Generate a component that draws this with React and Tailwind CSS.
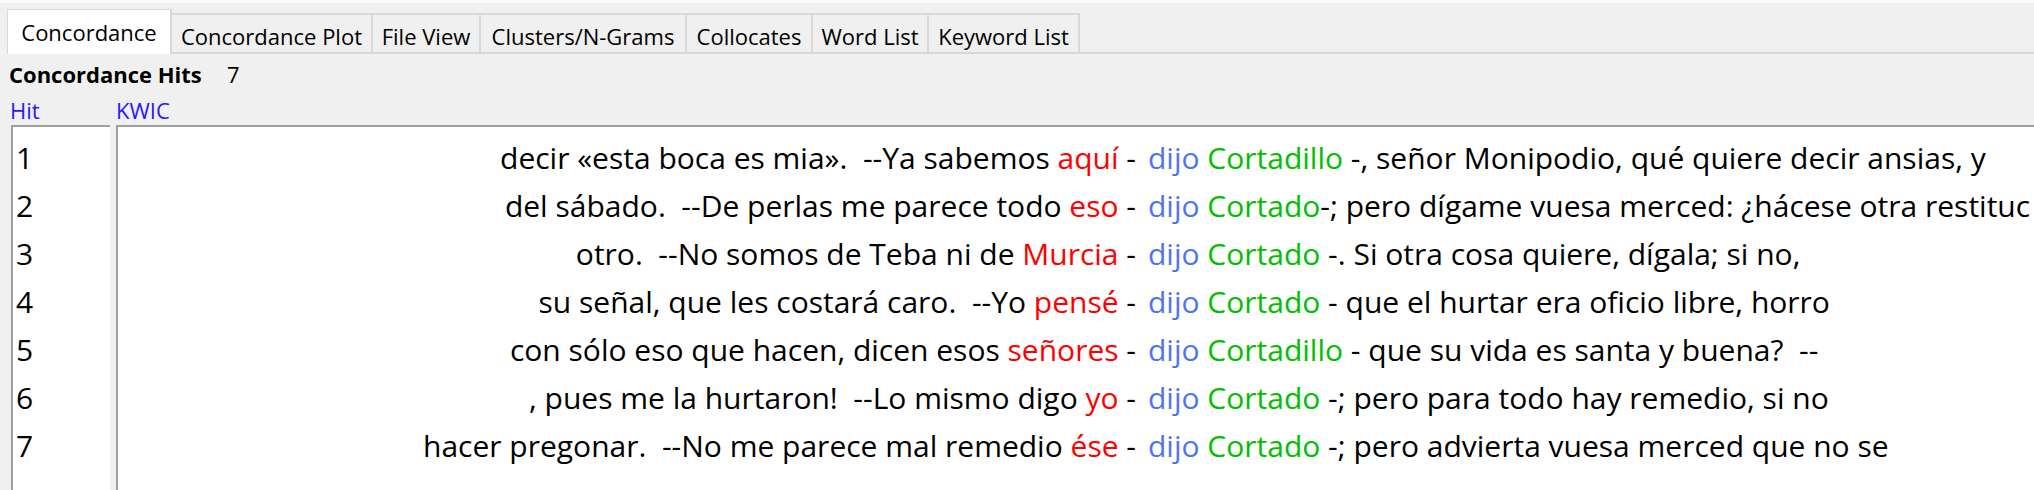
import React from 'react';

const tabs = [
  { label: 'Concordance', width: 'w-[165px]', active: true },
  { label: 'Concordance Plot', width: 'w-[201px]' },
  { label: 'File View', width: 'w-[108px]' },
  { label: 'Clusters/N-Grams', width: 'w-[206px]' },
  { label: 'Collocates', width: 'w-[126px]' },
  { label: 'Word List', width: 'w-[116px]' },
  { label: 'Keyword List', width: 'w-[151px]' },
];

const hits = [
  { left: 'decir «esta boca es mia».  --Ya sabemos ', word: 'aquí', coll: 'Cortadillo', rest: ' -, señor Monipodio, qué quiere decir ansias, y' },
  { left: 'del sábado.  --De perlas me parece todo ', word: 'eso', coll: 'Cortado', rest: '-; pero dígame vuesa merced: ¿hácese otra restituc' },
  { left: 'otro.  --No somos de Teba ni de ', word: 'Murcia', coll: 'Cortado', rest: ' -. Si otra cosa quiere, dígala; si no,' },
  { left: 'su señal, que les costará caro.  --Yo ', word: 'pensé', coll: 'Cortado', rest: ' - que el hurtar era oficio libre, horro' },
  { left: 'con sólo eso que hacen, dicen esos ', word: 'señores', coll: 'Cortadillo', rest: ' - que su vida es santa y buena?  --' },
  { left: ', pues me la hurtaron!  --Lo mismo digo ', word: 'yo', coll: 'Cortado', rest: ' -; pero para todo hay remedio, si no' },
  { left: 'hacer pregonar.  --No me parece mal remedio ', word: 'ése', coll: 'Cortado', rest: ' -; pero advierta vuesa merced que no se' },
];

const Tab = ({ label, width, active }) => {
  if (active) {
    return (
      <div className={`${width} h-[45px] shrink-0 flex justify-center pt-[8px] bg-white border-l border-t border-r-2 border-[#d9d9d9]`}>
        {label}
      </div>
    );
  }
  return (
    <div className={`${width} h-[41px] shrink-0 flex justify-center pt-[7px] border-t-2 border-r-2 border-b-2 border-[#d9d9d9]`}>
      {label}
    </div>
  );
};

export default function App() {
  return (
    <div className="h-[490px] w-[2034px] overflow-hidden bg-[#f0f0f0] flex flex-col text-black font-['Open_Sans',sans-serif]">
      <div className="h-[3px] bg-[#fafafa]" />

      {/* tab strip */}
      <div className="h-[51px] flex items-end pl-[7px] text-[22px] leading-[28px]">
        {tabs.map((t) => (
          <Tab key={t.label} {...t} />
        ))}
        <div className="flex-1 h-[2px] bg-[#d9d9d9]" />
      </div>

      <div className="pt-[6px] pl-[9px] text-[22px] leading-[28px] flex">
        <span className="w-[218px] font-bold">Concordance Hits</span>
        <span>7</span>
      </div>

      <div className="mt-[8px] flex text-[22px] leading-[28px] text-[#2a16ff]">
        <span className="w-[116px] pl-[10px]">Hit</span>
        <span>KWIC</span>
      </div>

      <div className="mt-[1px] flex-1 flex pl-[11px] text-[30px] leading-[48px]">
        <div className="w-[99px] shrink-0 bg-white border-l-2 border-t-2 border-[#a0a0a0] pt-[7px] pl-[3px]">
          {hits.map((h, i) => (
            <div key={i}>{i + 1}</div>
          ))}
        </div>
        <div className="ml-[6px] w-[1940px] shrink-0 bg-white border-l-2 border-t-2 border-[#a0a0a0] pt-[7px] overflow-hidden">
          {hits.map((h, i) => (
            <div key={i} className="flex whitespace-pre">
              <div className="w-[1018px] shrink-0 text-right overflow-hidden">
                {h.left}
                <span className="text-[#ff0000]">{h.word}</span>
                {' -'}
              </div>
              <div className="pl-[12px] shrink-0">
                <span className="text-[#4f74f5]">dijo</span>{' '}
                <span className="text-[#00c000]">{h.coll}</span>
                {h.rest}
              </div>
            </div>
          ))}
        </div>
      </div>
    </div>
  );
}
